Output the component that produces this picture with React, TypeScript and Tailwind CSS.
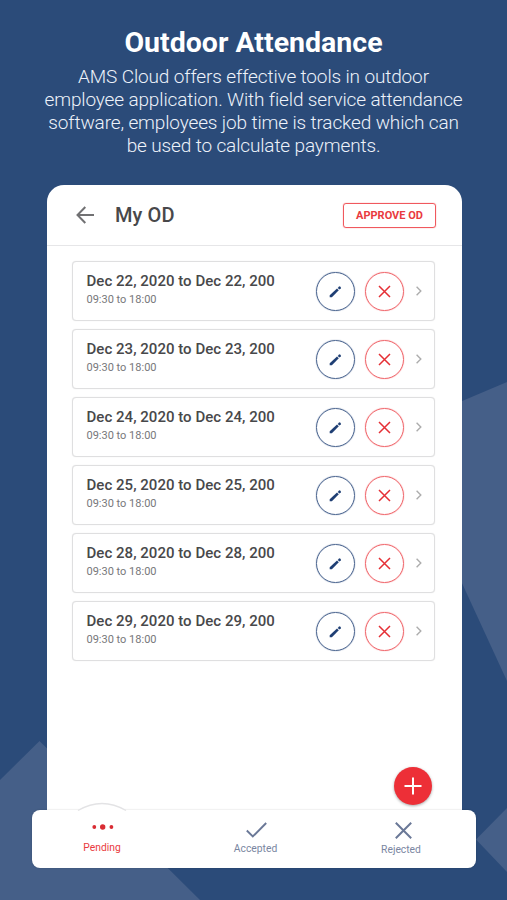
const days = ["22", "23", "24", "25", "28", "29"];

function Pencil() {
  return (
    <svg width="13" height="13" viewBox="0 0 13 13" fill="#1f3f74">
      <path d="M.7 12.200V10.200L8 3.500 9.800 5.300 2.900 12.200Z" />
      <path d="M8.700 2.900 10.200 1.500Q10.600 1.200 11 1.500L11.900 2.400Q12.200 2.800 11.900 3.200L10.500 4.600Z" />
    </svg>
  );
}

function Row({ day }: { day: string }) {
  return (
    <li className="flex h-[60px] items-center rounded-[4px] border border-[#dfdfe0] bg-white pl-[14px] pr-[11px] shadow-[0_0_1px_rgba(0,0,0,0.12)]">
      <div className="flex-1 pb-[2px]">
        <div className="whitespace-nowrap text-[15px] font-medium leading-[19px] tracking-[0.03px] text-[#48484a]">
          Dec {day}, 2020 to Dec {day}, 200
        </div>
        <div className="mt-px text-[11px] leading-[16px] text-[#77777a]">09:30 to 18:00</div>
      </div>
      <button className="flex size-[39px] items-center justify-center rounded-full border border-[#4a648f] shadow-[0_0_1px_#4a648f]">
        <Pencil />
      </button>
      <button className="ml-[9.5px] flex size-[39px] items-center justify-center rounded-full border border-[#f0656a] shadow-[0_0_1px_#f0656a]">
        <svg width="13" height="13" viewBox="0 0 13 13" stroke="#e52f35" strokeWidth="1.5">
          <path d="M1 1 12 12M12 1 1 12" />
        </svg>
      </button>
      <svg className="ml-[11.5px]" width="8" height="10" viewBox="0 0 8 10" fill="none" stroke="#adadad" strokeWidth="1.4">
        <path d="M1.600.800 5.800 5 1.600 9.200" />
      </svg>
    </li>
  );
}

export default function App() {
  return (
    <div className="relative isolate flex h-[900px] w-[507px] flex-col overflow-hidden bg-[#2b4b79] font-['Roboto',sans-serif]">
      <svg className="absolute inset-0 -z-10" width="507" height="900" fill="#455f88">
        <path d="M39.5 741 0 780V900H200Z" />
        <path d="M455 404 507 382V681L455 568Z" />
        <path d="M476 839.500 507 808V872Z" />
      </svg>
      <header className="pt-[26px] text-center text-white">
        <h1 className="text-[28.5px] font-bold leading-[34px]">Outdoor Attendance</h1>
        <p className="mt-[5px] whitespace-nowrap text-[19px] font-light leading-[23px] tracking-[-0.14px] text-[#edf2fa]">
          AMS Cloud offers effective tools in outdoor
          <br />
          employee application. With field service attendance
          <br />
          software, employees job time is tracked which can
          <br />
          be used to calculate payments.
        </p>
      </header>
      <main className="relative ml-[47px] mt-[28px] flex h-[625px] w-[415px] flex-col rounded-t-[17px] bg-white">
        <div className="flex h-[61px] items-center border-b border-[#e6e6e8] pl-[29px] pr-[26px]">
          <svg width="19" height="18" viewBox="0 0 19 18" fill="none" stroke="#717173" strokeWidth="2">
            <path d="M18 9H1.800M9.300 1 1.500 9l7.800 8" />
          </svg>
          <h2 className="ml-[20px] flex-1 text-[20px] font-medium leading-6 tracking-[0.1px] text-[#48484a]">My OD</h2>
          <button className="h-[25px] w-[93px] rounded-[3px] border border-[#f0595e] pt-[2px] text-[11px] font-bold text-[#e93a40] shadow-[0_0_1px_#f0595e]">
            APPROVE OD
          </button>
        </div>
        <ul className="ml-[24.5px] mt-[15px] flex w-[363.5px] flex-col gap-[8px]">
          {days.map((d) => (
            <Row key={d} day={d} />
          ))}
        </ul>
        <button className="absolute bottom-[5px] right-[30.5px] flex size-[38px] items-center justify-center rounded-full bg-[#ed2f37] shadow-[0_1px_3px_rgba(0,0,0,0.35)]">
          <svg width="18" height="18" viewBox="0 0 18 18" stroke="#fff" strokeWidth="2">
            <path d="M9 .5v17M.5 9h17" />
          </svg>
        </button>
      </main>
      <nav className="relative ml-[32px] flex h-[58px] w-[444px] rounded-[8px] bg-white text-[10.3px] leading-[13px] text-[#7a86a1] shadow-[0_0_2px_rgba(0,0,0,0.2)]">
        <svg className="absolute left-[45px] top-[-8px]" width="50" height="10" viewBox="0 0 50 10" fill="#fff" stroke="#e3e3e5" strokeWidth="1.300">
          <path d="M1 8.500Q25-5.500 49 8.500" />
        </svg>
        <div className="flex w-[140px] flex-col items-center pt-[13px] text-[#e93a40]">
          <svg className="ml-px" width="22" height="8" viewBox="0 0 22 8" fill="#d92c33">
            <circle cx="2.300" cy="4" r="1.900" />
            <circle cx="10.700" cy="4" r="2.700" />
            <circle cx="19.400" cy="4" r="1.900" />
          </svg>
          <span className="mt-[9.500px]">Pending</span>
        </div>
        <div className="flex w-[167px] flex-col items-center pt-[12px]">
          <svg className="ml-px" width="21" height="16" viewBox="0 0 21 16" fill="none" stroke="#6a7897" strokeWidth="1.900">
            <path d="M.8 8.500 6.800 14.500 20.200 1" />
          </svg>
          <span className="mt-[4px]">Accepted</span>
        </div>
        <div className="flex w-[123px] flex-col items-center pt-[12px]">
          <svg className="ml-[5px]" width="17" height="17" viewBox="0 0 17 17" stroke="#6a7897" strokeWidth="2">
            <path d="M.8.800 16.200 16.200M16.200.800.800 16.200" />
          </svg>
          <span className="ml-px mt-[4px]">Rejected</span>
        </div>
      </nav>
    </div>
  );
}
